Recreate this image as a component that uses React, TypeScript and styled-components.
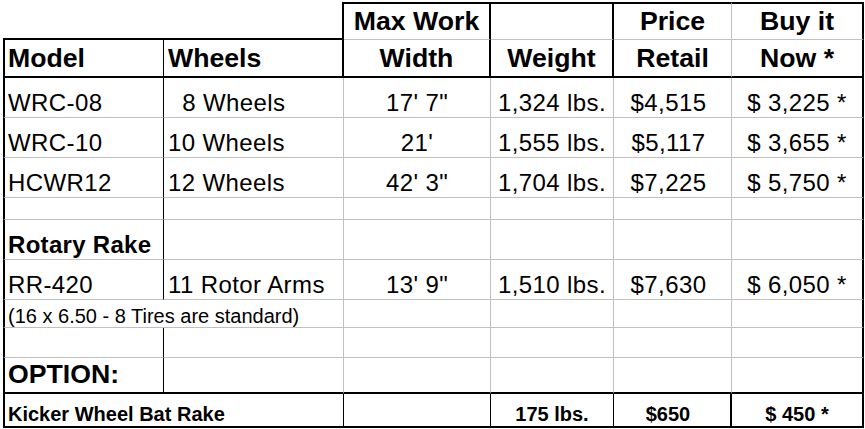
import React from 'react';
import styled, { createGlobalStyle, css } from 'styled-components';

const GlobalStyle = createGlobalStyle`
  html, body { margin: 0; padding: 0; background: #ffffff; }
  body { font-family: "Liberation Sans", Arial, sans-serif; color: #000000; }
`;

type Line = 'none' | 'grid' | 'thin' | 'thick';
const borderOf = (l: Line = 'none') =>
  ({ none: 'none', grid: '1px solid #c0c0c0', thin: '1px solid #000000', thick: '2px solid #000000' }[l]);

type Variant = 'head' | 'body' | 'bodyBold' | 'note' | 'option' | 'foot';
type Align = 'left' | 'wheels' | 'center' | 'price';

const variants: Record<Variant, ReturnType<typeof css>> = {
  head: css`font-size: 26.67px; font-weight: 700; padding-bottom: 4px;`,
  body: css`font-size: 24px; letter-spacing: 0.4px; padding-bottom: 2px;`,
  bodyBold: css`font-size: 24px; font-weight: 700; letter-spacing: 0.3px; padding-bottom: 2px;`,
  note: css`font-size: 20px; padding-bottom: 1px;`,
  option: css`font-size: 26.67px; font-weight: 700; padding-bottom: 4px;`,
  foot: css`font-size: 20px; font-weight: 700; padding-bottom: 2px;`,
};

const Sheet = styled.div`
  width: 865px;
  height: 429px;
  box-sizing: border-box;
  padding: 2px 0 0 3px;
  background: #ffffff;
  display: grid;
  grid-template-columns: 161px 180px 147px 123px 118px 132px;
  grid-template-rows: 38px 38px 40px 40px 40px 22px 40px 40px 28px 30px 36px 34px;
  align-content: start;
  justify-content: start;
  overflow: hidden;
`;

const Cell = styled.div<{
  $t?: Line; $r?: Line; $b?: Line; $l?: Line;
  $span?: number; $align?: Align; $v?: Variant;
}>`
  box-sizing: border-box;
  min-width: 0;
  display: flex;
  align-items: flex-end;
  line-height: 1;
  white-space: pre;
  grid-column: span ${p => p.$span ?? 1};
  border-top: ${p => borderOf(p.$t)};
  border-right: ${p => borderOf(p.$r)};
  border-bottom: ${p => borderOf(p.$b)};
  border-left: ${p => borderOf(p.$l)};
  justify-content: ${p => (p.$align === 'left' || p.$align === 'wheels' ? 'flex-start' : 'center')};
  padding-left: ${p => (p.$align === 'left' ? '3px' : p.$align === 'wheels' ? '4px' : '0')};
  padding-right: ${p => (p.$align === 'price' ? '8px' : '0')};
  ${p => variants[p.$v ?? 'body']}
`;

type Spec = {
  text?: string; v?: Variant; align?: Align; span?: number;
  t?: Line; r?: Line; b?: Line; l?: Line;
};

const colAlign: Align[] = ['left', 'wheels', 'center', 'center', 'price', 'center'];

const bodyRow = (texts: string[], opts: { v0?: Variant; bottom?: Line } = {}): Spec[] => {
  const b = opts.bottom ?? 'grid';
  const rights: Line[] = ['thin', 'grid', 'grid', 'grid', 'grid', 'thick'];
  return rights.map((r, i) => ({
    text: texts[i] ?? '',
    v: i === 0 && opts.v0 ? opts.v0 : 'body',
    align: colAlign[i],
    r,
    b,
    l: i === 0 ? 'thick' : undefined,
  }));
};

const rows: Spec[][] = [
  [
    { span: 2, r: 'thick', b: 'thick' },
    { text: 'Max Work', v: 'head', align: 'center', t: 'thick', r: 'thick', b: 'grid' },
    { t: 'thick', r: 'thick', b: 'grid' },
    { text: 'Price', v: 'head', align: 'center', t: 'thick', r: 'grid', b: 'grid' },
    { text: 'Buy it', v: 'head', align: 'center', t: 'thick', r: 'thick', b: 'grid' },
  ],
  [
    { text: 'Model', v: 'head', align: 'left', l: 'thick', r: 'thin', b: 'thick' },
    { text: 'Wheels', v: 'head', align: 'wheels', r: 'thick', b: 'thick' },
    { text: 'Width', v: 'head', align: 'center', r: 'thick', b: 'thick' },
    { text: 'Weight', v: 'head', align: 'center', r: 'thick', b: 'thick' },
    { text: 'Retail', v: 'head', align: 'center', r: 'grid', b: 'thick' },
    { text: 'Now *', v: 'head', align: 'center', r: 'thick', b: 'thick' },
  ],
  bodyRow(['WRC-08', '  8 Wheels', '17\' 7"', '1,324 lbs.', '$4,515', '$ 3,225 *']),
  bodyRow(['WRC-10', '10 Wheels', '21\'', '1,555 lbs.', '$5,117', '$ 3,655 *']),
  bodyRow(['HCWR12', '12 Wheels', '42\' 3"', '1,704 lbs.', '$7,225', '$ 5,750 *']),
  bodyRow([]),
  bodyRow(['Rotary Rake'], { v0: 'bodyBold' }),
  bodyRow(['RR-420', '11 Rotor Arms', '13\' 9"', '1,510 lbs.', '$7,630', '$ 6,050 *']),
  [
    { text: '(16 x 6.50 - 8 Tires are standard)', v: 'note', align: 'left', span: 2, l: 'thick', r: 'grid', b: 'grid' },
    ...bodyRow([]).slice(2),
  ],
  bodyRow([]),
  bodyRow(['OPTION:'], { v0: 'option', bottom: 'thick' }),
  [
    { text: 'Kicker Wheel Bat Rake', v: 'foot', align: 'left', span: 2, l: 'thick', r: 'thin', b: 'thick' },
    { r: 'thin', b: 'thick' },
    { text: '175 lbs.', v: 'foot', align: 'center', r: 'thin', b: 'thick' },
    { text: '$650', v: 'foot', align: 'price', r: 'thick', b: 'thick' },
    { text: '$ 450 *', v: 'foot', align: 'center', r: 'thick', b: 'thick' },
  ],
];

export default function App() {
  return (
    <>
      <GlobalStyle />
      <Sheet>
        {rows.map((row, ri) =>
          row.map((c, ci) => (
            <Cell
              key={`${ri}-${ci}`}
              $t={c.t}
              $r={c.r}
              $b={c.b}
              $l={c.l}
              $span={c.span}
              $align={c.align}
              $v={c.v}
            >
              {c.text}
            </Cell>
          ))
        )}
      </Sheet>
    </>
  );
}
